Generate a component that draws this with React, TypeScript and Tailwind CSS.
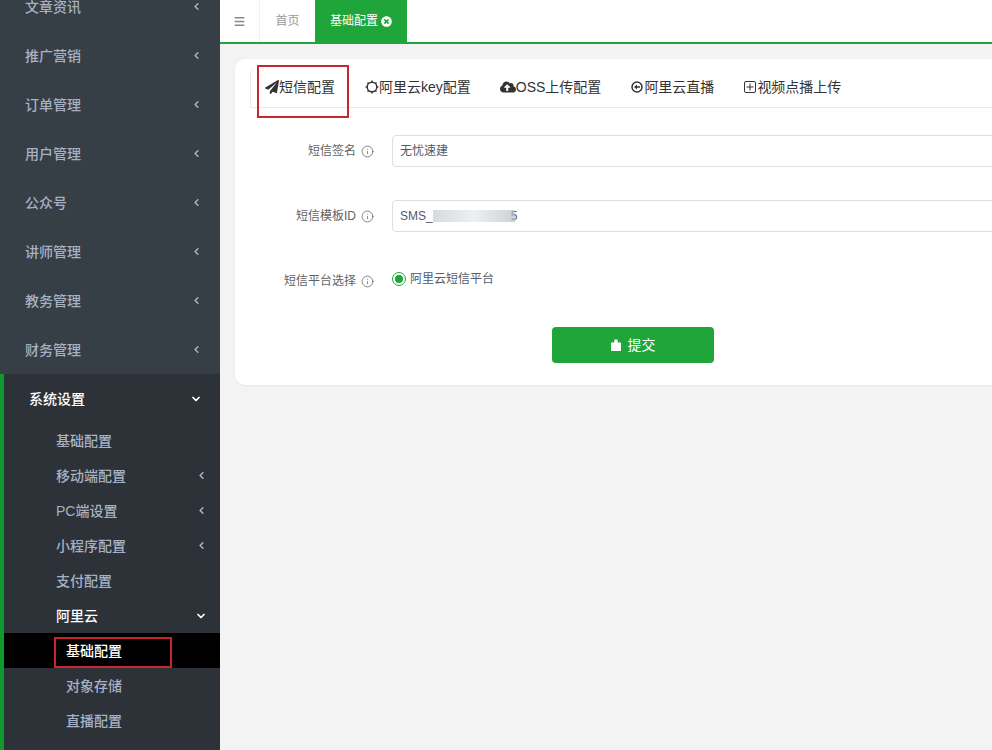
import React from "react";
import { ChevronLeft, ChevronDown, Menu, Info } from "lucide-react";
import { FaPaperPlane, FaCloudUploadAlt, FaTimesCircle } from "react-icons/fa";

const font = { fontFamily: '"Liberation Sans","Noto Sans CJK SC",sans-serif' };

function TopItem({ label }: { label: string }) {
  return (
    <div className="flex h-[49px] items-center justify-between pl-[25px] pr-[18px] text-sm font-medium text-[#a7b1c2]">
      <span>{label}</span>
      <ChevronLeft size={11} strokeWidth={3.5} className="text-[#a7b1c2]" />
    </div>
  );
}

function SubItem({ label, arrow, white }: { label: string; arrow?: "left" | "down"; white?: boolean }) {
  return (
    <div className={`flex h-[35px] items-center justify-between pl-[52px] pr-[13px] text-sm font-medium ${white ? "text-white" : "text-[#a7b1c2]"}`}>
      <span>{label}</span>
      {arrow === "left" && <ChevronLeft size={11} strokeWidth={3.5} />}
      {arrow === "down" && <ChevronDown size={12} strokeWidth={3.5} />}
    </div>
  );
}

function Gear() {
  return (
    <svg width="14" height="14" viewBox="0 0 14 14" fill="none" stroke="#333" className="shrink-0">
      <circle cx="7" cy="7" r="4.8" strokeWidth="1.4" />
      <path d="M7 0.6v1.6M7 11.8v1.6M0.6 7h1.6M11.8 7h1.6M2.5 2.5l1.1 1.1M10.4 10.4l1.1 1.1M2.5 11.5l1.1-1.1M10.4 3.6l1.1-1.1" strokeWidth="1.4" />
    </svg>
  );
}

function CircleBack() {
  return (
    <svg width="12" height="12" viewBox="0 0 12 12" fill="none" className="shrink-0">
      <circle cx="6" cy="6" r="5" stroke="#333" strokeWidth="1.5" />
      <path d="M9 5.2H6V3.4L3 6l3 2.6V6.8h3z" fill="#333" />
    </svg>
  );
}

function BoxPlus() {
  return (
    <svg width="12" height="12" viewBox="0 0 12 12" fill="none" stroke="#333" strokeWidth="1" className="shrink-0">
      <rect x="0.5" y="0.5" width="11" height="11" rx="1.5" />
      <path d="M6 2.5v7M2.5 6h7" />
    </svg>
  );
}

function Bag() {
  return (
    <svg width="10" height="12" viewBox="0 0 10 12" fill="white" className="shrink-0">
      <path d="M0 3.5h3.2V2a1.8 1.8 0 0 1 3.6 0v1.5H10V12H0z" />
    </svg>
  );
}

function Tab({ icon, label, gap }: { icon: React.ReactNode; label: string; gap: string }) {
  return (
    <div className={`flex items-center pb-[2px] text-sm text-[#333] ${gap}`}>
      {icon}
      <span>{label}</span>
    </div>
  );
}

function FieldLabel({ label }: { label: string }) {
  return (
    <div className="flex w-[124px] shrink-0 items-center justify-end gap-[5px] text-xs text-[#606266]">
      <span>{label}</span>
      <Info size={13} strokeWidth={1.3} className="text-[#555]" />
    </div>
  );
}

function Input({ value }: { value: React.ReactNode }) {
  return (
    <div className="ml-[18px] flex h-[32px] w-[640px] items-center rounded border border-[#dcdee2] bg-white px-[7px] text-xs text-[#515a6e]">
      {value}
    </div>
  );
}

export default function App() {
  return (
    <div className="flex h-[750px] w-[992px] overflow-hidden bg-[#f3f3f4]" style={font}>
      <aside className="h-[750px] w-[220px] shrink-0 overflow-hidden bg-[#363e46]">
        <div className="-mt-[18px]">
          {["文章资讯", "推广营销", "订单管理", "用户管理", "公众号", "讲师管理", "教务管理", "财务管理"].map((l) => (
            <TopItem key={l} label={l} />
          ))}
        </div>
        <div className="h-[400px] border-l-4 border-[#109a2e] bg-[#2d3239]">
          <div className="flex h-[49px] items-center justify-between pl-[25px] pr-[18px] text-sm font-medium text-white">
            <span>系统设置</span>
            <ChevronDown size={12} strokeWidth={3.5} />
          </div>
          <SubItem label="基础配置" />
          <SubItem label="移动端配置" arrow="left" />
          <SubItem label="PC端设置" arrow="left" />
          <SubItem label="小程序配置" arrow="left" />
          <SubItem label="支付配置" />
          <SubItem label="阿里云" arrow="down" white />
          <div className="relative flex h-[35px] items-center bg-black pl-[62px] text-sm font-medium text-white">
            基础配置
            <div className="absolute left-[50px] top-[4px] h-[31px] w-[118px] border-2 border-[#c9252f]" />
          </div>
          <div className="flex h-[35px] items-center pl-[62px] text-sm font-medium text-[#a7b1c2]">对象存储</div>
          <div className="flex h-[35px] items-center pl-[62px] text-sm font-medium text-[#a7b1c2]">直播配置</div>
        </div>
      </aside>

      <main className="min-w-0 flex-1">
        <header className="flex h-[44px] border-b-2 border-[#20a53a] bg-white">
          <div className="flex w-[40px] items-center justify-center border-r border-[#f0f0f0]">
            <Menu size={13} strokeWidth={2.5} className="mr-[1px] text-[#888]" />
          </div>
          <div className="flex w-[55px] items-center justify-center text-xs text-[#999]">首页</div>
          <div className="flex w-[92px] items-center justify-center gap-[3px] bg-[#20a53a] text-xs text-white">
            基础配置
            <FaTimesCircle size={11} />
          </div>
        </header>

        <div className="relative mt-[15px] ml-[15px] h-[326px] w-[800px] rounded-[10px] bg-white pl-[15px] pt-[10px] shadow-[0_1px_2px_rgba(0,0,0,0.05)]">
          <div className="flex h-[39px] items-center border-b border-[#e8eaec]">
            <div className="flex h-[39px] w-[99px] items-center gap-0 rounded-tl border-l border-[#e8eaec] pb-[2px] pl-[14px] text-sm text-[#333]">
              <FaPaperPlane size={14} className="text-[#333]" />
              <span>短信配置</span>
            </div>
            <div className="ml-[16px]"><Tab icon={<Gear />} label="阿里云key配置" gap="" /></div>
            <div className="ml-[29px]"><Tab icon={<FaCloudUploadAlt size={16} className="text-[#333]" />} label="OSS上传配置" gap="" /></div>
            <div className="ml-[30px]"><Tab icon={<CircleBack />} label="阿里云直播" gap="gap-px" /></div>
            <div className="ml-[30px]"><Tab icon={<BoxPlus />} label="视频点播上传" gap="gap-px" /></div>
          </div>
          <div className="absolute left-[22px] top-[6px] h-[53px] w-[92px] border-2 border-[#c9252f]" />

          <div className="mt-[27px] flex items-center pl-[-0px]">
            <FieldLabel label="短信签名" />
            <Input value="无忧速建" />
          </div>
          <div className="mt-[33px] flex items-center">
            <FieldLabel label="短信模板ID" />
            <Input
              value={
                <span className="flex items-center">
                  SMS_
                  <span className="h-[12px] w-[82px] bg-gradient-to-r from-[#c8ccd0] via-[#e4e8ee] to-[#b8bcc2] opacity-70" />
                  <span className="-ml-[4px]">5</span>
                </span>
              }
            />
          </div>
          <div className="mt-[41px] flex items-center">
            <FieldLabel label="短信平台选择" />
            <div className="ml-[18px] -mt-[5px] flex items-center gap-[4px] text-xs text-[#515a6e]">
              <span className="flex h-[14px] w-[14px] items-center justify-center rounded-full border border-[#20a53a] bg-white">
                <span className="h-[8px] w-[8px] rounded-full bg-[#20a53a]" />
              </span>
              阿里云短信平台
            </div>
          </div>
          <div className="mt-[38px] pl-[302px]">
            <button className="flex h-[36px] w-[162px] items-center justify-center gap-[7px] rounded bg-[#20a53a] text-sm text-white">
              <Bag />
              提交
            </button>
          </div>
        </div>
      </main>
    </div>
  );
}
